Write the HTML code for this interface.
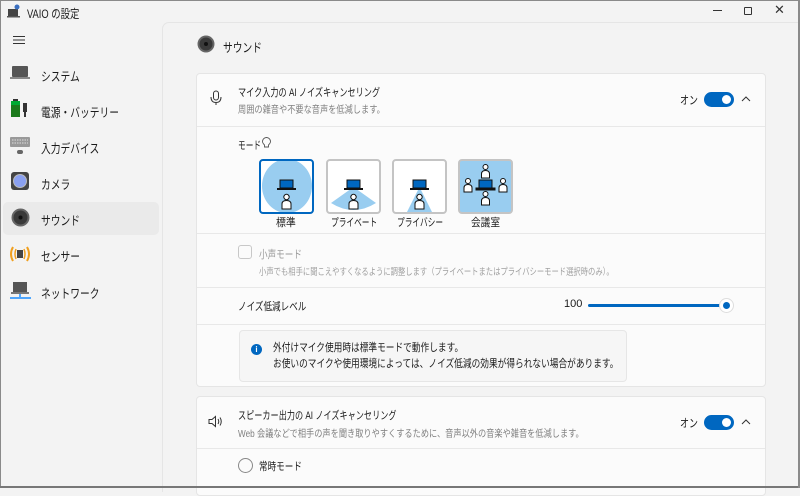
<!DOCTYPE html>
<html><head><meta charset="utf-8"><style>
*{box-sizing:border-box;margin:0;padding:0}
body{width:800px;height:488px;overflow:hidden;background:#f3f3f3;font-family:"Liberation Sans","Noto Sans CJK JP",sans-serif;color:#1a1a1a;position:relative}
.win{position:absolute;left:0;top:0;width:800px;height:488px;border:1px solid #8a8a8a;border-bottom:1px solid #777}
.abs{position:absolute}
.t{font-size:11px;white-space:nowrap;transform:scaleX(.78);transform-origin:0 0}
.s7{transform:scaleX(.7)}
.s8{transform:scaleX(.82)}
.nav{position:absolute;left:10px;font-size:12px}
.panel{position:absolute;left:162px;top:22px;width:640px;height:470px;background:#f3f3f3;border-left:1px solid #e5e5e5;border-top:1px solid #e5e5e5;border-radius:7px 0 0 0}
.card{position:absolute;left:196px;width:570px;background:#fbfbfb;border:1px solid #e5e5e5;border-radius:4px}
.hr{position:absolute;left:0;right:0;height:1px;background:#e8e8e8}
.tog{position:absolute;width:30px;height:15px;border-radius:8px;background:#0067c0}
.tog:after{content:"";position:absolute;right:3px;top:3px;width:9px;height:9px;border-radius:50%;background:#fff}
.tile{position:absolute;top:159px;width:55px;height:55px;border:2px solid #c4c4c4;border-radius:4px;background:#fff;overflow:hidden}
.sub{color:#808080;font-size:10px}
</style></head><body>
<div class="win"></div>
<svg class="abs" style="left:7px;top:4px" width="14" height="14"><rect x="1" y="5" width="10" height="7" fill="#444"/><rect x="0" y="12" width="13" height="1.5" fill="#555"/><circle cx="10" cy="3" r="2.5" fill="#3a6fc0"/></svg>
<div class="abs t" style="left:27px;top:5px;font-size:12px">VAIO の設定</div>
<div class="abs" style="left:713px;top:10px;width:9px;height:1px;background:#333"></div>
<div class="abs" style="left:744px;top:7px;width:8px;height:8px;border:1px solid #333;border-radius:1px"></div>
<div class="abs" style="left:774px;top:2px;font-size:13px;color:#333">✕</div>
<svg class="abs" style="left:13px;top:35px" width="12" height="10"><path d="M0 1.5H12M0 5H12M0 8.5H12" stroke="#333" stroke-width="1"/></svg>
<svg class="abs" style="left:10px;top:64px" width="20" height="17"><rect x="2" y="2" width="16" height="11" fill="#555" rx="1"/><rect x="0" y="13" width="20" height="2" fill="#888"/></svg>
<div class="nav t" style="left:41px;top:66px;font-size:12.5px">システム</div>
<svg class="abs" style="left:10px;top:99px" width="20" height="20"><rect x="1" y="2" width="9" height="16" fill="#1b7a1b"/><rect x="1" y="2" width="9" height="4" fill="#0a3"/><rect x="3" y="0" width="5" height="2" fill="#333"/><rect x="13" y="4" width="4" height="9" fill="#333"/><rect x="14" y="13" width="2" height="5" fill="#333"/></svg>
<div class="nav t" style="left:41px;top:102px;font-size:12.5px">電源・バッテリー</div>
<svg class="abs" style="left:10px;top:137px" width="20" height="18"><rect x="0" y="0" width="20" height="10" fill="#999" rx="1"/><path d="M2 3H18M2 6H18" stroke="#ddd" stroke-width="1" stroke-dasharray="1.5 1"/><rect x="7" y="13" width="6" height="4" rx="2" fill="#666"/></svg>
<div class="nav t" style="left:41px;top:138px;font-size:12.5px">入力デバイス</div>
<svg class="abs" style="left:11px;top:172px" width="18" height="18"><rect width="18" height="18" rx="3" fill="#444"/><circle cx="9" cy="9" r="6.5" fill="#8aa0f0"/><circle cx="9" cy="9" r="6.5" fill="none" stroke="#bbb" stroke-width="1"/></svg>
<div class="nav t" style="left:41px;top:174px;font-size:12.5px">カメラ</div>
<div class="abs" style="left:3px;top:202px;width:156px;height:33px;background:#eaeaea;border-radius:5px"></div>
<svg class="abs" style="left:11px;top:208px" width="19" height="19"><circle cx="9.5" cy="9.5" r="9" fill="#666"/><circle cx="9.5" cy="9.5" r="7" fill="#3a3a3a"/><circle cx="9.5" cy="9.5" r="2" fill="#111"/></svg>
<div class="nav t" style="left:41px;top:210px;font-size:12.5px">サウンド</div>
<svg class="abs" style="left:9px;top:245px" width="22" height="18"><path d="M4 2Q0 9 4 16M18 2Q22 9 18 16" stroke="#f0a020" stroke-width="2" fill="none"/><path d="M7 4Q5 9 7 14M15 4Q17 9 15 14" stroke="#f0a020" stroke-width="1.5" fill="none"/><rect x="8" y="5" width="6" height="8" fill="#444"/></svg>
<div class="nav t" style="left:41px;top:246px;font-size:12.5px">センサー</div>
<svg class="abs" style="left:10px;top:281px" width="21" height="20"><rect x="3" y="1" width="14" height="10" fill="#555"/><rect x="1" y="11" width="18" height="2" fill="#777"/><path d="M10 13V16M0 17H21" stroke="#1a8cff" stroke-width="1.5"/></svg>
<div class="nav t" style="left:41px;top:283px;font-size:12.5px">ネットワーク</div>

<div class="panel"></div>
<svg class="abs" style="left:197px;top:35px" width="18" height="18"><circle cx="9" cy="9" r="8.5" fill="#666"/><circle cx="9" cy="9" r="6.5" fill="#3a3a3a"/><circle cx="9" cy="9" r="2" fill="#111"/></svg>
<div class="abs t" style="left:223px;top:37px;font-size:12.5px">サウンド</div>

<div class="card" style="top:73px;height:314px">
  <div class="hr" style="top:52px"></div>
  <div class="hr" style="top:159px"></div>
  <div class="hr" style="top:213px"></div>
  <div class="hr" style="top:250px"></div>
</div>
<svg class="abs" style="left:210px;top:90px" width="12" height="16"><rect x="3.5" y="1" width="5" height="9" rx="2.5" fill="none" stroke="#333"/><path d="M1 7Q1 12.5 6 12.5Q11 12.5 11 7M6 12.5V15" stroke="#333" fill="none"/></svg>
<div class="abs t" style="left:238px;top:84px;font-size:11px;transform:scaleX(.74)">マイク入力の AI ノイズキャンセリング</div>
<div class="abs t sub s8" style="left:238px;top:101px">周囲の雑音や不要な音声を低減します。</div>
<div class="abs t" style="left:680px;top:92px;font-size:11.5px">オン</div>
<div class="tog" style="left:704px;top:92px"></div>
<svg class="abs" style="left:741px;top:96px" width="10" height="6"><path d="M1 5L5 1L9 5" stroke="#333" fill="none"/></svg>

<div class="abs t" style="left:238px;top:137px;font-size:11px;transform:scaleX(.7)">モード</div>
<svg class="abs" style="left:262px;top:137px" width="9" height="12"><path d="M2.5 8Q0.5 6 0.5 4.5A4 4 0 0 1 8.5 4.5Q8.5 6 6.5 8V10H2.5Z" fill="none" stroke="#555" stroke-width="0.9"/></svg>

<div class="tile" style="left:259px;border-color:#0067c0;background:#fff"><div class="abs" style="left:1px;top:-2px;width:50px;height:54px;border-radius:50%;background:#99cdf0"></div>
 <svg class="abs" style="left:16px;top:18px" width="20" height="32"><rect x="3" y="1" width="13" height="8" fill="#0067c0" stroke="#111" stroke-width="1"/><rect x="0" y="9" width="19" height="2" fill="#111"/><circle cx="9.5" cy="18" r="2.7" fill="#fff" stroke="#111"/><path d="M5 30V25Q5 21.5 9.5 21.5Q14 21.5 14 25V30Z" fill="#fff" stroke="#111"/></svg></div>
<div class="tile" style="left:326px"><svg class="abs" style="left:0;top:0" width="51" height="51"><path d="M25.5 26L3 42Q25.5 56 48 42Z" fill="#99cdf0"/></svg>
 <svg class="abs" style="left:16px;top:18px" width="20" height="32"><rect x="3" y="1" width="13" height="8" fill="#0067c0" stroke="#111"/><rect x="0" y="9" width="19" height="2" fill="#111"/><circle cx="9.5" cy="18" r="2.7" fill="#fff" stroke="#111"/><path d="M5 30V25Q5 21.5 9.5 21.5Q14 21.5 14 25V30Z" fill="#fff" stroke="#111"/></svg></div>
<div class="tile" style="left:392px"><svg class="abs" style="left:0;top:0" width="51" height="51"><path d="M25.5 26L13 51H38Z" fill="#99cdf0"/></svg>
 <svg class="abs" style="left:16px;top:18px" width="20" height="32"><rect x="3" y="1" width="13" height="8" fill="#0067c0" stroke="#111"/><rect x="0" y="9" width="19" height="2" fill="#111"/><circle cx="9.5" cy="18" r="2.7" fill="#fff" stroke="#111"/><path d="M5 30V25Q5 21.5 9.5 21.5Q14 21.5 14 25V30Z" fill="#fff" stroke="#111"/></svg></div>
<div class="tile" style="left:458px;background:#99cdf0;border-color:#c4c4c4"><svg class="abs" style="left:0;top:0" width="51" height="51" stroke="#111" stroke-width="1">
 <g fill="#fff"><circle cx="25.5" cy="6" r="2.5"/><path d="M21.5 17V13Q21.5 9.5 25.5 9.5Q29.5 9.5 29.5 13V17Z"/>
 <circle cx="25.5" cy="33" r="2.5"/><path d="M21.5 44V40Q21.5 36.5 25.5 36.5Q29.5 36.5 29.5 40V44Z"/>
 <circle cx="8" cy="20" r="2.5"/><path d="M4 31V27Q4 23.5 8 23.5Q12 23.5 12 27V31Z"/>
 <circle cx="43" cy="20" r="2.5"/><path d="M39 31V27Q39 23.5 43 23.5Q47 23.5 47 27V31Z"/></g>
 <rect x="19" y="19" width="13" height="8" fill="#0067c0"/><rect x="16" y="27" width="19" height="2" fill="#111"/></svg></div>
<div class="abs t" style="left:276px;top:214px;font-size:11px;transform:scaleX(.9)">標準</div>
<div class="abs t s7" style="left:331px;top:214px;font-size:11px">プライベート</div>
<div class="abs t s7" style="left:397px;top:214px;font-size:11px">プライバシー</div>
<div class="abs t" style="left:471px;top:214px;font-size:11px;transform:scaleX(.88)">会議室</div>

<div class="abs" style="left:238px;top:245px;width:14px;height:14px;border:1px solid #c8c8c8;border-radius:3px;background:#fbfbfb"></div>
<div class="abs t" style="left:259px;top:246px;color:#9a9a9a;font-size:11px">小声モード</div>
<div class="abs t sub" style="left:259px;top:264px;color:#a0a0a0;font-size:9.5px;transform:scaleX(.77)">小声でも相手に聞こえやすくなるように調整します（プライベートまたはプライバシーモード選択時のみ）。</div>

<div class="abs t" style="left:238px;top:298px;font-size:11px">ノイズ低減レベル</div>
<div class="abs t" style="left:564px;top:298px;font-size:11px;transform:none">100</div>
<div class="abs" style="left:588px;top:304px;width:135px;height:3px;background:#0067c0;border-radius:2px"></div>
<div class="abs" style="left:719px;top:298px;width:15px;height:15px;border-radius:50%;background:#fff;border:1px solid #ddd"></div>
<div class="abs" style="left:723px;top:302px;width:7px;height:7px;border-radius:50%;background:#0067c0"></div>

<div class="abs" style="left:239px;top:330px;width:388px;height:52px;background:#f6f6f6;border:1px solid #e6e6e6;border-radius:4px"></div>
<div class="abs" style="left:251px;top:344px;width:11px;height:11px;border-radius:50%;background:#0067c0;color:#fff;font-size:8px;font-weight:bold;text-align:center;line-height:11px">i</div>
<div class="abs t" style="left:273px;top:339px;font-size:11px;transform:scaleX(.79)">外付けマイク使用時は標準モードで動作します。</div>
<div class="abs t" style="left:273px;top:355px;font-size:11px;transform:scaleX(.79)">お使いのマイクや使用環境によっては、ノイズ低減の効果が得られない場合があります。</div>

<div class="card" style="top:396px;height:100px">
  <div class="hr" style="top:51px"></div>
</div>
<svg class="abs" style="left:208px;top:415px" width="16" height="13"><path d="M1 4.5H4L7.5 1.5V11.5L4 8.5H1Z" fill="none" stroke="#333"/><path d="M10 4Q11.5 6.5 10 9M12 2.5Q14.5 6.5 12 10.5" stroke="#333" fill="none"/></svg>
<div class="abs t" style="left:238px;top:407px;font-size:11px;transform:scaleX(.74)">スピーカー出力の AI ノイズキャンセリング</div>
<div class="abs t sub s8" style="left:238px;top:425px">Web 会議などで相手の声を聞き取りやすくするために、音声以外の音楽や雑音を低減します。</div>
<div class="abs t" style="left:680px;top:415px;font-size:11.5px">オン</div>
<div class="tog" style="left:704px;top:415px"></div>
<svg class="abs" style="left:741px;top:419px" width="10" height="6"><path d="M1 5L5 1L9 5" stroke="#333" fill="none"/></svg>
<div class="abs" style="left:238px;top:458px;width:15px;height:15px;border-radius:50%;border:1px solid #888;background:#fbfbfb"></div>
<div class="abs t" style="left:259px;top:458px;font-size:11px">常時モード</div>
<div class="abs" style="left:0;top:486px;width:800px;height:2px;background:#777"></div>
<div class="abs" style="left:798px;top:0;width:2px;height:488px;background:#8a8a8a"></div>
</body></html>
